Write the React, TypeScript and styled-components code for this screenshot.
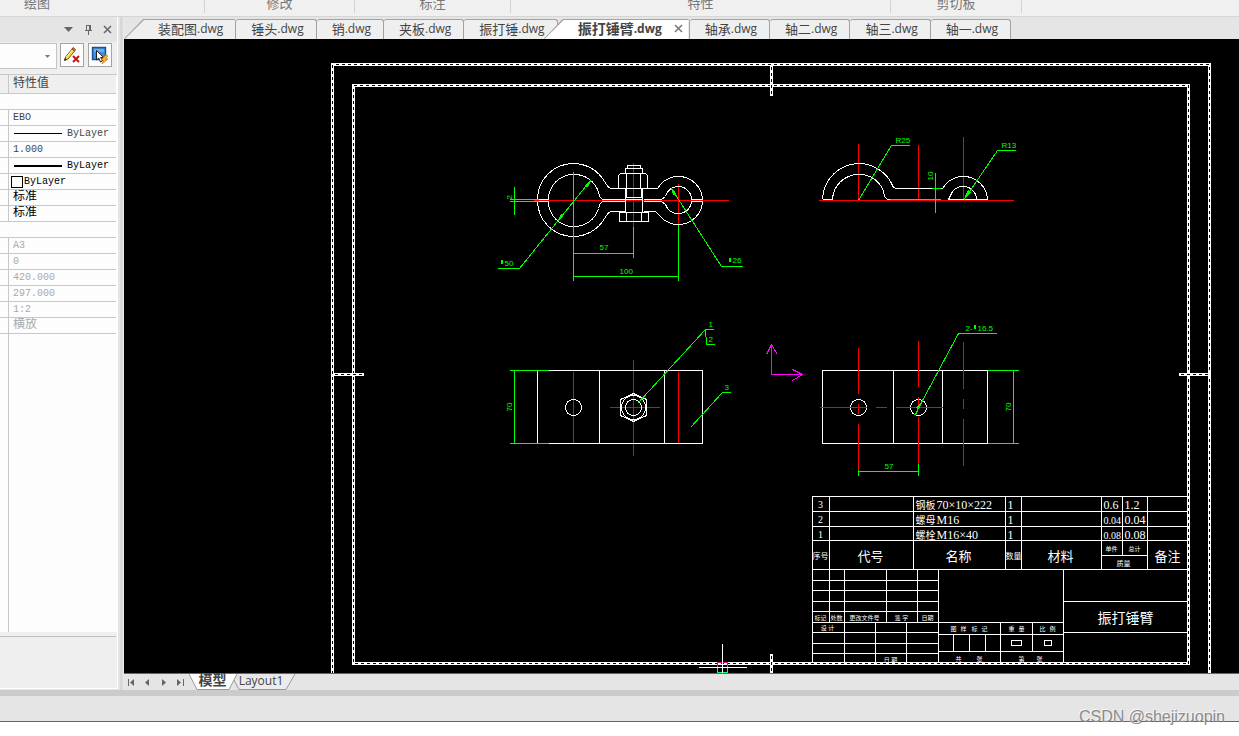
import React from 'react';
import styled, { createGlobalStyle } from 'styled-components';

const UI_FONT = '"Open Sans", "Noto Sans CJK SC", sans-serif';
const DIM_FONT = '"Liberation Sans", "Noto Sans CJK SC", sans-serif';
const BLOCK_FONT = '"Liberation Serif", "Noto Sans CJK SC", serif';

const GlobalStyle = createGlobalStyle`
  * { box-sizing: border-box; }
  body { margin: 0; background: #fff; font-family: ${UI_FONT}; color: #444; }
  button { font: inherit; color: inherit; padding: 0; border: 0; background: none; }
`;

/* ---------- frame ---------- */
const Shell = styled.div`
  display: flex;
  flex-direction: column;
  height: 100vh;
  min-height: 480px;
  overflow: hidden;
`;
const Ribbon = styled.header`
  display: flex;
  flex: none;
  height: 17px;
  overflow: hidden;
  background: #f0f0f0;
  border-bottom: 1px solid #d6d6d6;
`;
const RibbonGroup = styled.div<{ $width: number; $first?: boolean }>`
  display: flex;
  justify-content: ${(p) => (p.$first ? 'flex-start' : 'center')};
  align-items: flex-end;
  flex: none;
  width: ${(p) => p.$width}px;
  height: 13px;
  padding-left: ${(p) => (p.$first ? 24 : 0)}px;
  border-right: 1px solid #d2d2d2;
  font-size: 13px;
  line-height: 20px;
  color: #777;
`;
const Workspace = styled.div`
  display: flex;
  flex: 1;
  min-height: 0;
  background: #e5e5e5;
`;
const BottomBar = styled.footer`
  position: relative;
  flex: none;
  height: 32px;
  background: #e5e5e5;
  border-top: 6px solid #cbcbcb;
  border-bottom: 1px solid #666;
  margin-bottom: 14px;
`;
const Watermark = styled.span`
  position: absolute;
  right: 14px;
  top: 11px;
  font: 16px/20px "Liberation Sans", sans-serif;
  color: #8c8c8c;
  text-shadow: -1px -1px 0 #f6f6f6;
`;

/* ---------- property panel ---------- */
const Panel = styled.aside`
  display: flex;
  flex-direction: column;
  flex: none;
  width: 118px;
  margin-bottom: 1px;
  background: #efefef;
  border-right: 1px solid #fff;
  border-bottom: 1px solid #fff;
`;
const PanelHead = styled.div`
  display: flex;
  justify-content: flex-end;
  align-items: center;
  gap: 5px;
  height: 25px;
  padding-right: 3px;
  background: #e5e5e5;
`;
const HeadButton = styled.button`
  display: flex;
  align-items: center;
  justify-content: center;
  width: 14px;
  height: 14px;
`;
const PanelTools = styled.div`
  display: flex;
  height: 32px;
  padding-top: 1px;
  gap: 4px;
`;
const SelectWrap = styled.label`
  position: relative;
  width: 57px;
  height: 26px;
  margin-right: -1px;
  svg { position: absolute; right: 7px; top: 12px; pointer-events: none; }
`;
const ObjectSelect = styled.select`
  appearance: none;
  width: 100%;
  height: 26px;
  background: #fdfdfd;
  border: 1px solid #c4c4c4;
  border-left: 0;
  border-radius: 0;
`;
const ToolButton = styled.button`
  width: 24px;
  height: 24px;
  background: #fdfdfd;
  border: 1px solid #a3a3a3;
  svg { display: block; }
`;
const Grid = styled.div`
  flex: 1;
  min-height: 0;
  display: flex;
  flex-direction: column;
  background: #fdfdfd;
  border-top: 1px solid #c8c8c8;
`;
const PropTable = styled.table`
  width: 116px;
  border-spacing: 0;
  table-layout: fixed;
  font: 10px/15px "Liberation Mono", "Noto Sans CJK SC", monospace;
  td, th { padding: 0; height: 16px; border-bottom: 1px solid #c8c8c8; white-space: nowrap; overflow: hidden; text-align: left; font-weight: 400; }
  th { height: 19px; background: #efefef; color: #444; }
  th:first-child { border-right: 1px solid #c8c8c8; }
`;
const NameCell = styled.td`
  border-right: 1px solid #c8c8c8;
`;
const ValueCell = styled.td<{ $tone: 'text' | 'strong' | 'muted' }>`
  color: ${(p) => (p.$tone === 'muted' ? '#aaa' : p.$tone === 'strong' ? '#000' : '#444')};
`;
const Value = styled.span<{ $cjk?: boolean }>`
  display: flex;
  align-items: center;
  height: 15px;
  padding-left: 4px;
  font-size: ${(p) => (p.$cjk ? 12 : 10)}px;
`;
const Stroke = styled.i<{ $heavy?: boolean }>`
  width: 48px;
  margin: 0 5px 0 1px;
  border-top: ${(p) => (p.$heavy ? 2 : 1)}px solid #000;
`;
const Swatch = styled.i`
  width: 12px;
  height: 12px;
  margin: 0 1px 0 -2px;
  border: 1px solid #000;
`;
const GridRest = styled.div`
  flex: 1;
  width: 9px;
  border-right: 1px solid #c8c8c8;
`;
const PanelHint = styled.div`
  flex: none;
  height: 52px;
  width: 116px;
  margin-top: 4px;
  border-top: 1px solid #c0c0c0;
`;
const Splitter = styled.div`
  flex: none;
  width: 6px;
  background: #d8d8d8;
  border-left: 2px solid #e5e5e5;
  border-right: 1px solid #ebebeb;
`;

/* ---------- document area ---------- */
const Documents = styled.main`
  display: flex;
  flex-direction: column;
  flex: 1;
  min-width: 0;
`;
const TabStrip = styled.div`
  display: flex;
  flex: none;
  height: 22px;
  padding-top: 2px;
`;
const Tab = styled.button<{ $slanted?: boolean; $active?: boolean; $first?: boolean }>`
  position: relative;
  isolation: isolate;
  display: flex;
  align-items: center;
  flex: none;
  height: 20px;
  margin-left: ${(p) => (p.$slanted && !p.$first ? -14 : 0)}px;
  padding: 0 ${(p) => (p.$active ? 6 : 12)}px 2px ${(p) => (p.$slanted ? 34 : 15)}px;
  background: ${(p) => (p.$slanted ? 'none' : '#efefef')};
  border-top: 1px solid ${(p) => (p.$slanted ? 'transparent' : '#a2a2a2')};
  border-right: 1px solid #a2a2a2;
  border-radius: ${(p) => (p.$slanted ? '0 3px 0 0' : '3px 3px 0 0')};
  font-size: ${(p) => (p.$active ? 14 : 13)}px;
  font-weight: ${(p) => (p.$active ? 700 : 400)};
  line-height: 18px;
  white-space: nowrap;
  z-index: ${(p) => (p.$active ? 1 : 0)};
  &::before {
    content: '';
    display: ${(p) => (p.$slanted ? 'block' : 'none')};
    position: absolute;
    inset: -1px 0 0 0;
    background: #a2a2a2;
    clip-path: polygon(0 100%, 19px 0, 100% 0, 100% 100%);
    z-index: -2;
  }
  &::after {
    content: '';
    display: ${(p) => (p.$slanted ? 'block' : 'none')};
    position: absolute;
    inset: 0 0 0 1px;
    background: ${(p) => (p.$active ? '#fff' : '#efefef')};
    clip-path: polygon(0 100%, 19px 0, 100% 0, 100% 100%);
    z-index: -1;
  }
`;
const Ext = styled.span`
  font-size: 12px;
`;
const CloseMark = styled.svg`
  margin-left: 12px;
`;
const Canvas = styled.svg`
  display: block;
  flex: 1;
  min-height: 0;
  width: 100%;
  background: #000;
  font-family: ${DIM_FONT};
`;
const BlockText = styled.g`
  font-family: ${BLOCK_FONT};
`;
const LayoutBar = styled.div`
  display: flex;
  flex: none;
  height: 17px;
  border-top: 1px solid #666;
`;
const NavButton = styled.button`
  display: flex;
  align-items: center;
  justify-content: center;
  width: 16px;
  height: 17px;
`;
const LayoutTab = styled.button<{ $active?: boolean }>`
  position: relative;
  isolation: isolate;
  display: flex;
  justify-content: center;
  flex: none;
  width: ${(p) => (p.$active ? 49 : 62)}px;
  height: 16px;
  margin-left: ${(p) => (p.$active ? 1 : -4)}px;
  font-size: ${(p) => (p.$active ? 14 : 12)}px;
  font-weight: ${(p) => (p.$active ? 700 : 400)};
  line-height: ${(p) => (p.$active ? 12 : 14)}px;
  z-index: ${(p) => (p.$active ? 1 : 0)};
  svg { position: absolute; left: 0; top: 0; z-index: -1; }
  span { padding-right: ${(p) => (p.$active ? 2 : 8)}px; }
`;

const documents = ['装配图', '锤头', '销', '夹板', '振打锤', '振打锤臂', '轴承', '轴二', '轴三', '轴一'];
const ACTIVE = '振打锤臂';

type Row = { value?: string; tone?: 'text' | 'strong' | 'muted'; kind?: 'line' | 'heavy' | 'swatch'; cjk?: boolean };
const rows: Row[] = [
  {},
  { value: 'EBO' },
  { value: 'ByLayer', kind: 'line' },
  { value: '1.000' },
  { value: 'ByLayer', kind: 'heavy', tone: 'strong' },
  { value: 'ByLayer', kind: 'swatch', tone: 'strong' },
  { value: '标准', tone: 'strong', cjk: true },
  { value: '标准', tone: 'strong', cjk: true },
  {},
  { value: 'A3', tone: 'muted' },
  { value: '0', tone: 'muted' },
  { value: '420.000', tone: 'muted' },
  { value: '297.000', tone: 'muted' },
  { value: '1:2', tone: 'muted' },
  { value: '横放', tone: 'muted', cjk: true },
];

const Properties = () => (
  <Panel>
    <PanelHead>
      <HeadButton aria-label="菜单"><svg width="10" height="6"><path d="M0 0h9L4.500 5z" fill="#666" /></svg></HeadButton>
      <HeadButton aria-label="固定">
        <svg width="9" height="11" fill="none" stroke="#666" shapeRendering="crispEdges"><path d="M2.500 6V1.500h4V6M5.500 1v5M1 6.500h7M4.500 7v4" /></svg>
      </HeadButton>
      <HeadButton aria-label="关闭"><svg width="9" height="9"><path d="M1 1l7 7M8 1L1 8" stroke="#666" strokeWidth="1.500" /></svg></HeadButton>
    </PanelHead>
    <PanelTools>
      <SelectWrap>
        <ObjectSelect aria-label="对象"><option value="" /></ObjectSelect>
        <svg width="5" height="3"><path d="M0 0h5L2.500 3z" fill="#777" /></svg>
      </SelectWrap>
      <ToolButton aria-label="清除">
        <svg width="22" height="22">
          <path d="M3.500 16L4.500 13 11.500 4.500 14 6.500 7 15z" fill="#ffd83a" stroke="#7a5a18" />
          <path d="M11 5l1-1.500 2.500 2-1 1.500z" fill="#e08a4a" stroke="#8a3c12" />
          <path d="M5.500 13l6-7" stroke="#fff7b0" />
          <path d="M3 17l1-3 2 2z" fill="#222" />
          <path d="M12 12l6 6M18 12l-6 6" stroke="#c81414" strokeWidth="2" />
        </svg>
      </ToolButton>
      <ToolButton aria-label="快速选择">
        <svg width="22" height="22">
          <path d="M3.500 3.500h13v12h-13z" fill="#3f8fd8" stroke="#1d4f9c" strokeWidth="1.400" />
          <path d="M5 5h10v3H5z" fill="#69afe8" />
          <path d="M7.500 6.500v9.500l2.200-2 1.800 4 2-1-1.800-3.500h3z" fill="#fff" stroke="#222" />
          <path d="M17 11l-5 5h3l-2 4 6-5h-3l3-3z" fill="#ffc21a" stroke="#e07a10" strokeWidth=".8" />
        </svg>
      </ToolButton>
    </PanelTools>
    <Grid>
      <PropTable>
        <colgroup><col width="9" /><col /></colgroup>
        <thead>
          <tr><th aria-label="特性名" /><th scope="col"><Value $cjk>特性值</Value></th></tr>
        </thead>
        <tbody>
          {rows.map((r, i) =>
            r.value ? (
              <tr key={i}>
                <NameCell />
                <ValueCell $tone={r.tone ?? 'text'}>
                  <Value $cjk={r.cjk}>
                    {r.kind === 'swatch' && <Swatch />}
                    {(r.kind === 'line' || r.kind === 'heavy') && <Stroke $heavy={r.kind === 'heavy'} />}
                    {r.value}
                  </Value>
                </ValueCell>
              </tr>
            ) : (
              <tr key={i}><td colSpan={2} /></tr>
            ),
          )}
        </tbody>
      </PropTable>
      <GridRest />
    </Grid>
    <PanelHint />
  </Panel>
);

/* ---------- drawing ---------- */
const W = '#fff';
const R = '#f00';
const G = '#0f0';

/* Heavy sheet border: a white band with a dashed core. */
const Band = ({ d }: { d: string }) => (
  <>
    <path d={d} stroke={W} strokeWidth="3" strokeLinecap="square" />
    <path d={d} stroke="#000" strokeDasharray="3 3" />
  </>
);

type NoteProps = { x: number; y: number; size?: number; fill?: string; turn?: boolean; mid?: boolean; children: React.ReactNode };
const Note = ({ x, y, size = 8, fill = W, turn, mid, children }: NoteProps) => (
  <text x={x} y={y} fontSize={size} fill={fill} stroke="none" textAnchor={mid ? 'middle' : 'start'} transform={turn ? `rotate(-90 ${x} ${y})` : undefined}>
    {children}
  </text>
);

const Sheet = () => (
  <>
    <Band d="M332 673V64H1209V673" />
    <Band d="M353 85H1188V663H353z" />
    <Band d="M771 66V94M771 655V673M334 374H362M1180 374H1208" />
  </>
);

const ClampFront = () => (
  <>
    <path stroke={R} d="M533 200H728M633 162V226M678 183V224" />
    <g stroke={W}>
      <path d="M537 199A36 36 0 0 1 573 163A36 36 0 0 1 604 181C607 185 608 188 611 188H625M537 200A36 36 0 0 0 573 236A36 36 0 0 0 604 218C607 214 608 211 611 211H625" />
      <path d="M548 199A25 25 0 0 1 573 174A25 25 0 0 1 598 192C599 196 600 199 604 199H625M548 201A25 25 0 0 0 573 226A25 25 0 0 0 598 208C599 204 600 201 604 201H625" />
      <path d="M537 199H548M537 201H548M691 199H702M691 201H702" />
      <path d="M643 188H657L660 184A24 24 0 0 1 678 176A24 24 0 0 1 702 199M643 211H655L660 216A24 24 0 0 0 678 224A24 24 0 0 0 702 201" />
      <path d="M643 199H661L665 196A13 13 0 0 1 678 186A13 13 0 0 1 691 199M643 201H661L665 204A13 13 0 0 0 678 213A13 13 0 0 0 691 201" />
      <path d="M627 168V165H640V168M625 173V168H642V173M618 188V175L620 173H645L647 175V188zM626 173V188M640 173V188" />
      <path d="M625 188V212M642 188V212M626 188V197H641V188M625 199H642M619 212H648V221H619zM626 212V221M641 212V221" />
    </g>
    <g stroke={G}>
      <path d="M514 186V214M509 199H538M509 201H538M573 171V280M633 226V257M678 224V280M573 253H633M573 276H678" />
      <path d="M497 268H519L590 180M742 266H721L671 188" />
      <path d="M590 180L585 185L587 186zM558 219L561 214L562 216zM671 188L673 194L675 193z" fill={G} />
      <path d="M501 259V263M502 259V263M729 257V261M730 257V261" />
    </g>
    <Note x={504} y={265} fill={G}>50</Note>
    <Note x={599} y={249} fill={G}>57</Note>
    <Note x={619} y={273} fill={G}>100</Note>
    <Note x={732} y={262} fill={G}>26</Note>
    <Note x={511} y={199} fill={G} turn>2</Note>
  </>
);

const ArmSection = () => (
  <>
    <path stroke={R} d="M818 200H1013M858 143V200M918 144V199M963 136V200" />
    <path stroke={W} d="M822 199A37 37 0 0 1 859 163A37 37 0 0 1 890 181C892 184 892 188 896 188H942L945 184A24 24 0 0 1 963 176A24 24 0 0 1 987 199H948L950 195A13 13 0 0 1 963 186A13 13 0 0 1 976 199M822 199H832A26 26 0 0 1 858 174A25 25 0 0 1 883 191C884 195 884 199 889 199" />
    <g stroke={G}>
      <path d="M889 199H940M931 188H940M935 172V212M858 200L891 145H909M963 200L997 150H1015" />
      <path d="M965 196L968 190L970 192z" fill={G} />
    </g>
    <Note x={895} y={142} fill={G}>R25</Note>
    <Note x={1001} y={147} fill={G}>R13</Note>
    <Note x={932} y={180} fill={G} turn>10</Note>
  </>
);

const ClampPlan = () => (
  <>
    <path stroke={R} d="M573 371V443M633 359V455M678 371V443M609 407H659" />
    <g stroke={W}>
      <path d="M537 370H702V443H537zM599 370V443M664 370V443" />
      <circle cx="573" cy="407" r="8" />
      <circle cx="633" cy="407" r="8" />
      <circle cx="633" cy="407" r="12" />
      <path d="M633 393L646 399V415L633 421L620 415V399z" />
    </g>
    <path stroke={G} d="M509 370H548M509 443H548M514 370V443M637 403L705 329H713M705 329V336L706 337V344H714M690 427L722 392H730" />
    <Note x={511} y={411} fill={G} turn>70</Note>
    <Note x={708} y={326} fill={G}>1</Note>
    <Note x={708} y={341} fill={G}>2</Note>
    <Note x={724} y={389} fill={G}>3</Note>
  </>
);

const ArmPlan = () => (
  <>
    <g stroke={W}>
      <path d="M822 370H987V443H822zM893 370V443M942 370V443" />
      <circle cx="858" cy="407" r="8" />
      <circle cx="918" cy="407" r="8" />
    </g>
    <path stroke={R} d="M858 347V393M858 403V413M858 423V469M918 340V386M918 396V406M918 416V463M963 341V388M963 398V408M963 418V465M819 407H866M875 407H886M895 407H942" />
    <g stroke={G}>
      <path d="M858 469V475M918 463V475M858 471H918M987 370H1018M987 443H1018M1013 370V443M914 415L958 333H996" />
      <path d="M921 402L916 407L918 408zM914 415L917 411" fill={G} />
      <path d="M974 324V328M975 324V328" />
    </g>
    <Note x={884} y={468} fill={G}>57</Note>
    <Note x={965} y={330} fill={G}>2-</Note>
    <Note x={977} y={330} fill={G}>16.5</Note>
    <Note x={1010} y={411} fill={G} turn>70</Note>
  </>
);

const parts = [
  { no: 3, y: 508, cjk: '钢板', spec: '70×10×222', unit: '0.6', total: '1.2' },
  { no: 2, y: 523, cjk: '螺母', spec: 'M16', unit: '0.04', total: '0.04' },
  { no: 1, y: 538, cjk: '螺栓', spec: 'M16×40', unit: '0.08', total: '0.08' },
];
const headings: [string, number, number][] = [
  ['序号', 820, 8], ['代号', 870, 13], ['名称', 958, 13], ['数量', 1013, 8], ['材料', 1060, 13], ['备注', 1167, 13],
];
const smallLabels: [string, number, number][] = [
  ['标记', 820, 619], ['处数', 836, 619], ['更改文件号', 864, 619], ['签 字', 901, 619], ['日期', 927, 619],
  ['设 计', 827, 629], ['日 期', 890, 661], ['单件', 1111, 550], ['总计', 1134, 550],
  ['图', 953, 630], ['样', 963, 630], ['标', 974, 630], ['记', 984, 630],
  ['重', 1011, 630], ['量', 1021, 630], ['比', 1042, 630], ['例', 1052, 630],
  ['共', 958, 660], ['张', 979, 660], ['第', 1021, 660], ['张', 1039, 660],
];

const TitleBlock = () => (
  <BlockText>
    <g stroke={W}>
      <path d="M1187 496H812V662M812 511H1187M812 526H1187M812 540H1187M812 569H1187M829 496V622M913 496V569M1005 496V569M1021 496V569M1101 496V569M1122 496V555M1147 496V569M1101 555H1147" />
      <path d="M812 580H938M812 590H938M812 601H938M812 611H938M812 622H1063M812 632H938M812 643H938M812 653H938M844 569V662M886 569V622M917 569V622M938 569V662M875 622V662M906 622V662" />
      <path d="M938 634H1063M938 651H1063M1000 622V662M953 634V651M969 634V651M985 634V651M1032 622V651M1011 640H1021V645H1011zM1044 640H1051V645H1044zM1063 569V662M1063 601H1187M1063 632H1187" />
    </g>
    {parts.map((p) => (
      <React.Fragment key={p.no}>
        <Note x={820} y={p.y - 1} size={10} mid>{p.no}</Note>
        <Note x={915} y={p.y} size={10}>{p.cjk}</Note>
        <Note x={936} y={p.y} size={12}>{p.spec}</Note>
        <Note x={1007} y={p.y} size={12}>1</Note>
        <Note x={1103} y={p.y} size={p.unit.length > 3 ? 10 : 12}>{p.unit}</Note>
        <Note x={1124} y={p.y} size={12}>{p.total}</Note>
      </React.Fragment>
    ))}
    {headings.map(([t, x, s]) => <Note key={t} x={x} y={s > 10 ? 560 : 558} size={s} mid>{t}</Note>)}
    {smallLabels.map(([t, x, y], i) => <Note key={i} x={x} y={y} size={6} mid>{t}</Note>)}
    <Note x={1123} y={565} size={7} mid>质量</Note>
    <Note x={1125} y={622} size={14} mid>振打锤臂</Note>
  </BlockText>
);

const Drawing = () => (
  <Canvas role="img" aria-label="振打锤臂">
    <g transform="translate(-123.5 -38.5)" fill="none" shapeRendering="crispEdges">
      <Sheet />
      <ClampFront />
      <ArmSection />
      <ClampPlan />
      <ArmPlan />
      <TitleBlock />
      <path stroke="#f0f" d="M771 344V374H802M766 354L771 344L777 354M792 369L802 374L792 380" />
      <path stroke="#00ff80" d="M717 665V672H727V665" />
      <path stroke="#ff0080" d="M717 665V662H727V665" />
      <path stroke={W} d="M722 643V673M698 667H746" />
    </g>
  </Canvas>
);

const navIcons = [
  { label: '首页', d: 'M1 1h1v7H1zM7 1v7L3 4.500z' },
  { label: '上一页', d: 'M6 1v7L2 4.500z' },
  { label: '下一页', d: 'M3 1v7l4-3.500z' },
  { label: '末页', d: 'M2 1v7l4-3.500zM8 1h1v7H8z' },
];

export default function App() {
  return (
    <Shell>
      <GlobalStyle />
      <Ribbon>
        <RibbonGroup $width={205} $first>绘图</RibbonGroup>
        <RibbonGroup $width={150}>修改</RibbonGroup>
        <RibbonGroup $width={156}>标注</RibbonGroup>
        <RibbonGroup $width={380}>特性</RibbonGroup>
        <RibbonGroup $width={131}>剪切板</RibbonGroup>
      </Ribbon>
      <Workspace>
        <Properties />
        <Splitter />
        <Documents>
          <TabStrip role="tablist">
            {documents.map((name, i) => {
              const active = name === ACTIVE;
              return (
                <Tab key={name} role="tab" aria-selected={active} $active={active} $first={i === 0} $slanted={active || i === 0}>
                  {name}<Ext>.dwg</Ext>
                  {active && <CloseMark width="9" height="9"><path d="M1 1l7 7M8 1L1 8" stroke="#777" strokeWidth="1.500" /></CloseMark>}
                </Tab>
              );
            })}
          </TabStrip>
          <Drawing />
          <LayoutBar>
            {navIcons.map((n) => (
              <NavButton key={n.label} aria-label={n.label}><svg width="10" height="9"><path d={n.d} fill="#666" /></svg></NavButton>
            ))}
            <LayoutTab $active>
              <svg width="49" height="16"><path d="M0 0L8 15.500H40L48 0" fill="#fff" stroke="#999" /></svg>
              <span>模型</span>
            </LayoutTab>
            <LayoutTab>
              <svg width="62" height="16"><path d="M0 6L5 15.500H52L61 0" fill="#ececec" stroke="#999" /></svg>
              <span>Layout1</span>
            </LayoutTab>
          </LayoutBar>
        </Documents>
      </Workspace>
      <BottomBar><Watermark>CSDN @shejizuopin</Watermark></BottomBar>
    </Shell>
  );
}
